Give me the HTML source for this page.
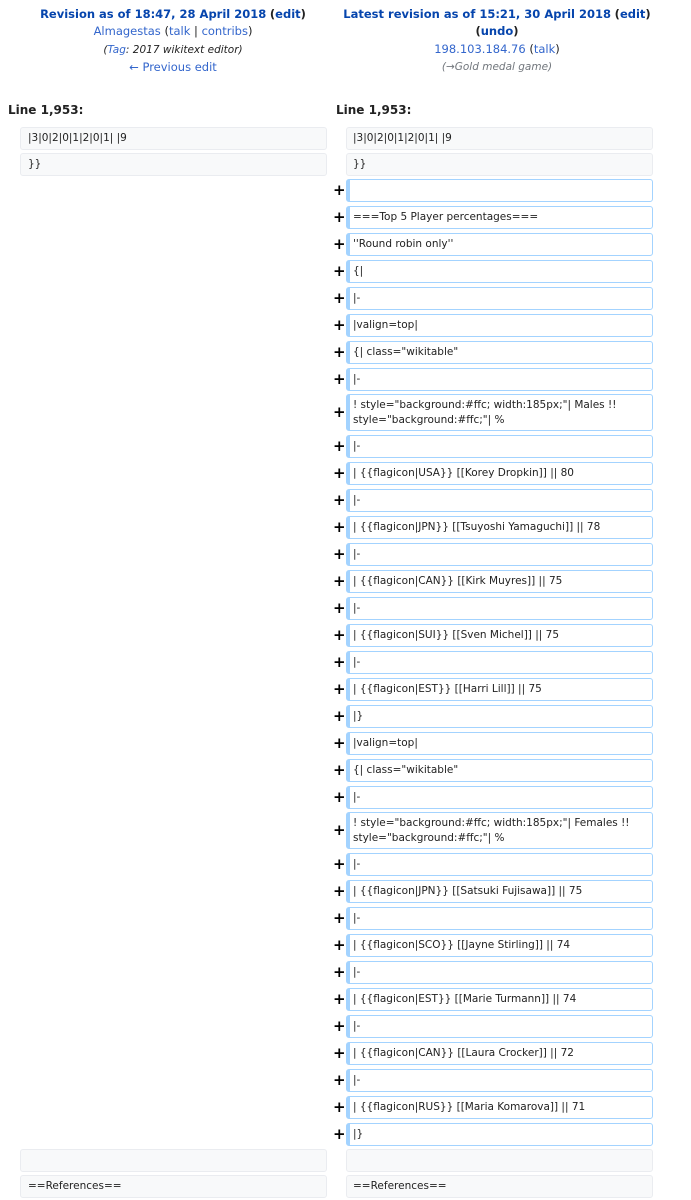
<!DOCTYPE html>
<html><head><meta charset="utf-8"><style>
body{margin:0;width:691px;height:1200px;background:#fff;font-family:"DejaVu Sans","Liberation Sans",sans-serif;color:#222;position:relative;overflow:hidden}
.h{position:absolute;top:6px;text-align:center;font-size:11.5px;line-height:17.3px}
.h a{color:#0645ad;text-decoration:none}
.h .n{color:#3366cc}
b.t{color:#0645ad}
.ln{position:absolute;top:103px;font-weight:bold;font-size:12px}
.r{position:absolute;box-sizing:border-box;font-size:10.5px;line-height:15px;padding:3px 0 3px 7px;border-radius:3px;border:1px solid #eaecf0;background:#f8f9fa;height:23px;white-space:nowrap}
.a{background:#fff;border-color:#a3d3ff;border-left-width:4px;left:346px;width:307px;padding-left:3px}
.c{width:307px}
.L{left:20px}.R{left:346px;padding-left:6px}
.p{position:absolute;left:333px;font-weight:bold;font-size:15px;line-height:16px;color:#000}
.d{height:37px;white-space:normal}
</style></head><body>
<div class="h" style="left:0;width:346px"><b class="t">Revision as of 18:47, 28 April 2018</b> <b>(<a>edit</a>)</b><br><a class="n">Almagestas</a> (<a class="n">talk</a> | <a class="n">contribs</a>)<br><i style="font-size:10.5px">(<a class="n">Tag</a>: 2017 wikitext editor)</i><br><a class="n">← Previous edit</a></div>
<div class="h" style="left:326px;width:342px"><b class="t">Latest revision as of 15:21, 30 April 2018</b> <b>(<a>edit</a>)</b><br><b>(<a>undo</a>)</b><br><a class="n">198.103.184.76</a> (<a class="n">talk</a>)<br><i style="font-size:10.5px;color:#72777d">(→Gold medal game)</i></div>
<div class="ln" style="left:8px">Line 1,953:</div>
<div class="ln" style="left:336px">Line 1,953:</div>
<div class="r c L" style="top:127px">|3|0|2|0|1|2|0|1| |9</div>
<div class="r c R" style="top:127px">|3|0|2|0|1|2|0|1| |9</div>
<div class="r c L" style="top:153px">}}</div>
<div class="r c R" style="top:153px">}}</div>

<div class="p" style="top:182px">+</div><div class="r a" style="top:179px"></div>
<div class="p" style="top:209px">+</div><div class="r a" style="top:206px">===Top 5 Player percentages===</div>
<div class="p" style="top:236px">+</div><div class="r a" style="top:233px">''Round robin only''</div>
<div class="p" style="top:263px">+</div><div class="r a" style="top:260px">{|</div>
<div class="p" style="top:290px">+</div><div class="r a" style="top:287px">|-</div>
<div class="p" style="top:317px">+</div><div class="r a" style="top:314px">|valign=top|</div>
<div class="p" style="top:344px">+</div><div class="r a" style="top:341px">{| class="wikitable"</div>
<div class="p" style="top:371px">+</div><div class="r a" style="top:368px">|-</div>
<div class="p" style="top:404px">+</div><div class="r a d" style="top:394px">! style="background:#ffc; width:185px;"| Males !! style="background:#ffc;"| %</div>
<div class="p" style="top:438px">+</div><div class="r a" style="top:435px">|-</div>
<div class="p" style="top:465px">+</div><div class="r a" style="top:462px">| {{flagicon|USA}} [[Korey Dropkin]] || 80</div>
<div class="p" style="top:492px">+</div><div class="r a" style="top:489px">|-</div>
<div class="p" style="top:519px">+</div><div class="r a" style="top:516px">| {{flagicon|JPN}} [[Tsuyoshi Yamaguchi]] || 78</div>
<div class="p" style="top:546px">+</div><div class="r a" style="top:543px">|-</div>
<div class="p" style="top:573px">+</div><div class="r a" style="top:570px">| {{flagicon|CAN}} [[Kirk Muyres]] || 75</div>
<div class="p" style="top:600px">+</div><div class="r a" style="top:597px">|-</div>
<div class="p" style="top:627px">+</div><div class="r a" style="top:624px">| {{flagicon|SUI}} [[Sven Michel]] || 75</div>
<div class="p" style="top:654px">+</div><div class="r a" style="top:651px">|-</div>
<div class="p" style="top:681px">+</div><div class="r a" style="top:678px">| {{flagicon|EST}} [[Harri Lill]] || 75</div>
<div class="p" style="top:708px">+</div><div class="r a" style="top:705px">|}</div>
<div class="p" style="top:735px">+</div><div class="r a" style="top:732px">|valign=top|</div>
<div class="p" style="top:762px">+</div><div class="r a" style="top:759px">{| class="wikitable"</div>
<div class="p" style="top:789px">+</div><div class="r a" style="top:786px">|-</div>
<div class="p" style="top:822px">+</div><div class="r a d" style="top:812px">! style="background:#ffc; width:185px;"| Females !! style="background:#ffc;"| %</div>
<div class="p" style="top:856px">+</div><div class="r a" style="top:853px">|-</div>
<div class="p" style="top:883px">+</div><div class="r a" style="top:880px">| {{flagicon|JPN}} [[Satsuki Fujisawa]] || 75</div>
<div class="p" style="top:910px">+</div><div class="r a" style="top:907px">|-</div>
<div class="p" style="top:937px">+</div><div class="r a" style="top:934px">| {{flagicon|SCO}} [[Jayne Stirling]] || 74</div>
<div class="p" style="top:964px">+</div><div class="r a" style="top:961px">|-</div>
<div class="p" style="top:991px">+</div><div class="r a" style="top:988px">| {{flagicon|EST}} [[Marie Turmann]] || 74</div>
<div class="p" style="top:1018px">+</div><div class="r a" style="top:1015px">|-</div>
<div class="p" style="top:1045px">+</div><div class="r a" style="top:1042px">| {{flagicon|CAN}} [[Laura Crocker]] || 72</div>
<div class="p" style="top:1072px">+</div><div class="r a" style="top:1069px">|-</div>
<div class="p" style="top:1099px">+</div><div class="r a" style="top:1096px">| {{flagicon|RUS}} [[Maria Komarova]] || 71</div>
<div class="p" style="top:1126px">+</div><div class="r a" style="top:1123px">|}</div>

<div class="r c L" style="top:1149px"></div>
<div class="r c R" style="top:1149px"></div>
<div class="r c L" style="top:1175px">==References==</div>
<div class="r c R" style="top:1175px">==References==</div>
</body></html>
